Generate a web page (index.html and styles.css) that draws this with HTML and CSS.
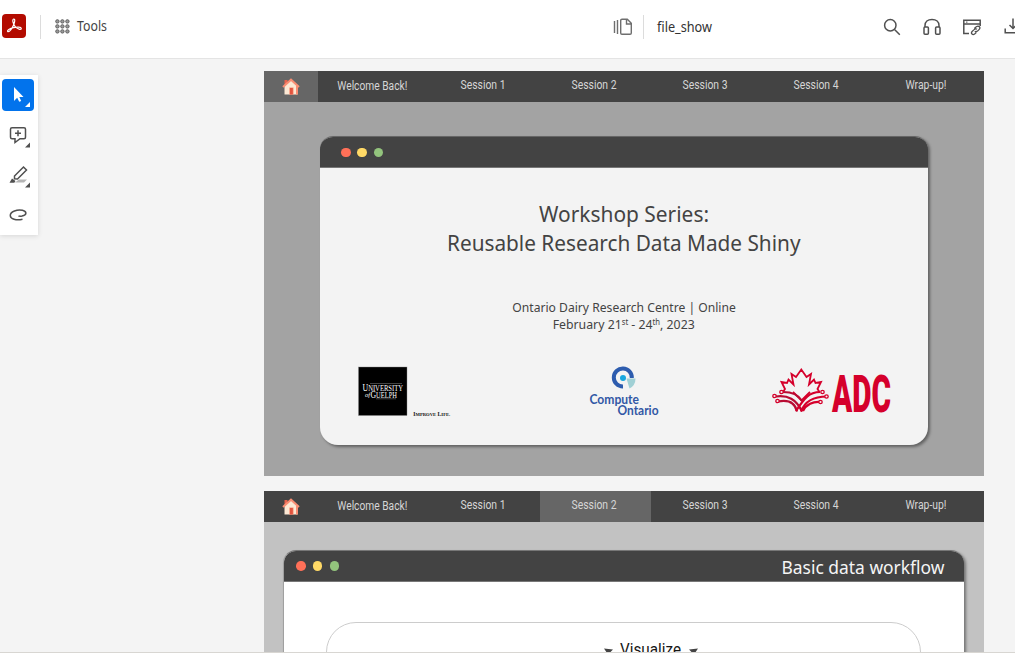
FILE: index.html
```html
<!DOCTYPE html>
<html lang="en">
<head>
<meta charset="utf-8">
<title>file_show</title>
<link rel="stylesheet" href="styles.css">
</head>
<body>
<div class="app">
<header class="topbar">
  <div class="brand">
    <svg class="logo" width="24" height="24" viewBox="0 0 24 24"><rect width="24" height="24" rx="4" fill="#b30b00"/><path d="M11.700 5c1.500-.2 1.200 2.700.2 5.200-1.500 3.800-4.400 7.900-5.900 7.400-1.800-.8 2.200-3.200 5.400-3.900 3.600-.8 7.800-.8 7.900.8.1 1.700-4 .5-6.100-1.900-2-2.200-3.400-7.200-1.500-7.600z" fill="none" stroke="#fff" stroke-width="1.200"/></svg>
    <i class="rule"></i>
    <svg width="15" height="15" viewBox="0 0 15 15" class="grid-icon"><g fill="#999" stroke="#606060"><circle cx="2.4" cy="2.4" r="1.7"/><circle cx="7.4" cy="2.4" r="1.7"/><circle cx="12.4" cy="2.4" r="1.7"/><circle cx="2.4" cy="7.4" r="1.7"/><circle cx="7.4" cy="7.4" r="1.7"/><circle cx="12.4" cy="7.4" r="1.7"/><circle cx="2.4" cy="12.4" r="1.7"/><circle cx="7.4" cy="12.4" r="1.7"/><circle cx="12.4" cy="12.4" r="1.7"/></g></svg>
    <svg class="ui-text tools" width="30" height="20"><text x="0" y="13" textLength="30" lengthAdjust="spacingAndGlyphs">Tools</text></svg>
  </div>
  <div class="document-name">
    <svg width="20" height="18" viewBox="0 0 20 18" fill="none" stroke="#6e6e6e" stroke-width="1.4"><path d="M1.500 3v12M4.500 2v14M9 1.200h5.300l4 4V15q0 1.300-1.300 1.300H9q-1.300 0-1.300-1.300V2.500q0-1.300 1.300-1.300zM13.500 1.500V6H18"/></svg>
    <i class="rule"></i>
    <svg class="ui-text" width="56" height="20"><text x="0" y="14" textLength="55" lengthAdjust="spacingAndGlyphs">file_show</text></svg>
  </div>
  <div class="actions">
    <svg width="18" height="18" viewBox="0 0 18 18" fill="none" stroke="#505050" stroke-width="1.5"><circle cx="7.300" cy="7.300" r="5.700"/><path d="M11.500 11.500l5.300 5.300"/></svg>
    <svg width="20" height="18" viewBox="0 0 20 18" fill="none" stroke="#505050" stroke-width="1.500"><path d="M3 9V7.500C3 4 5.700 1.500 10 1.500S17 4 17 7.500V9"/><rect x="2" y="9" width="4.400" height="7.300" rx="1"/><rect x="13.600" y="9" width="4.400" height="7.300" rx="1"/></svg>
    <svg width="20" height="18" viewBox="0 0 20 18" fill="none" stroke="#505050" stroke-width="1.500"><path d="M7 15.500H1.800V2.200H18.200V8M2 6H18"/><path d="M4 4.100h1.500" stroke-width="1"/><path d="M12.300 10.500l2-1.700c2.500-1.700 4.800.8 2.700 2.800l-1.500 1.500c-1 .9-2 .7-2.700.2M15 11.300c-.8-.8-2-.6-2.900.3l-2 1.900c-1.700 2 .6 4 2.500 2.600l1.700-1.500" stroke-width="1.300"/></svg>
    <svg width="18" height="18" viewBox="0 0 18 18" fill="none" stroke="#505050" stroke-width="1.500"><path d="M1.200 10.500v4.200H17v-4.200M9 .5v10M5.500 7L9 10.500 12.500 7"/></svg>
  </div>
</header>
<div class="workspace">
  <aside class="toolbar">
    <button class="tool selected"><svg width="32" height="32" viewBox="0 0 32 32"><path d="M12 8v14l3.200-3.200 2 4 2-.9-1.900-4H21.500z" fill="#fff"/><path d="M28 23v5h-5z" fill="#fff"/></svg></button>
    <button class="tool"><svg width="32" height="32" viewBox="0 0 32 32" fill="none" stroke="#505050" stroke-width="1.500"><path d="M10 8.700h12q1.500 0 1.500 1.500v8q0 1.500-1.500 1.500h-4L13 23.500v-3.800h-3q-1.500 0-1.500-1.500v-8q0-1.500 1.500-1.500zM16 11.200v6M13 14.200h6"/><path d="M28 23.500v5h-5z" fill="#505050" stroke="none"/></svg></button>
    <button class="tool"><svg width="32" height="32" viewBox="0 0 32 32"><path d="M17 20.500h8l-3 3h-9z" fill="#b5b5b5"/><path d="M12.500 17l9-9 3 3-9 9-3-.2z" fill="none" stroke="#505050" stroke-width="1.500"/><path d="M7.500 23.800l2.500-4.300 3.500 2.500-1.200 1.800z" fill="#505050"/><path d="M28 23.500v5h-5z" fill="#505050"/></svg></button>
    <button class="tool"><svg width="32" height="32" viewBox="0 0 32 32" fill="none" stroke="#505050" stroke-width="1.500"><path d="M20.500 20.300C14 21.800 8.500 20 8.300 16.700 8 12.500 15.500 10 20.500 11.300c4.800 1.400 4.300 4.700-.5 5.700-1.700.3-3 .2-3.500-.3"/></svg></button>
  </aside>
  <main class="pages">
    <section class="slide slide-cover">
      <nav class="slide-nav">
        <div class="home current"><svg width="18" height="18" viewBox="0 0 18 18"><path d="M2.500 2h3v5h-3z" fill="#e7644f"/><path d="M2.500 8L9 2l6.500 6v8.500h-13z" fill="#fce8d4"/><path d="M14 7h2v9.500h-2z" fill="#fa8e73"/><path d="M1 9l8-7.300L17 9" fill="none" stroke="#fa8e73" stroke-width="2"/><path d="M7.300 9.500h4.200v7H7.300z" fill="#fa8e73"/><path d="M8 10h2.800v6.500H8z" fill="#e2543f"/></svg></div>
        <div class="tab"><svg width="111" height="31"><text x="19.300" y="19.300" textLength="70" lengthAdjust="spacingAndGlyphs">Welcome Back!</text></svg></div>
        <div class="tab"><svg width="111" height="31"><text x="31.500" y="18.300" textLength="45" lengthAdjust="spacingAndGlyphs">Session 1</text></svg></div>
        <div class="tab"><svg width="111" height="31"><text x="31.500" y="18.300" textLength="45" lengthAdjust="spacingAndGlyphs">Session 2</text></svg></div>
        <div class="tab"><svg width="111" height="31"><text x="31.500" y="18.300" textLength="45" lengthAdjust="spacingAndGlyphs">Session 3</text></svg></div>
        <div class="tab"><svg width="111" height="31"><text x="31.500" y="18.300" textLength="45" lengthAdjust="spacingAndGlyphs">Session 4</text></svg></div>
        <div class="tab"><svg width="111" height="31"><text x="32.500" y="18.300" textLength="41" lengthAdjust="spacingAndGlyphs">Wrap-up!</text></svg></div>
      </nav>
      <article class="window cover">
        <div class="titlebar"><i class="dot red"></i><i class="dot yellow"></i><i class="dot green"></i></div>
        <div class="cover-body">
          <svg class="cover-text" width="608" height="180">
            <g font-size="22"><text x="219" y="54" textLength="170" lengthAdjust="spacingAndGlyphs">Workshop Series:</text><text x="127" y="83" textLength="353.500" lengthAdjust="spacingAndGlyphs">Reusable Research Data Made Shiny</text></g>
            <g font-size="12.800"><text x="192.300" y="144" textLength="223.500" lengthAdjust="spacingAndGlyphs">Ontario Dairy Research Centre | Online</text>
            <text x="232.700" y="161" textLength="142" lengthAdjust="spacingAndGlyphs">February 21<tspan font-size="8" dy="-4">st</tspan><tspan dy="4"> - 24</tspan><tspan font-size="8" dy="-4">th</tspan><tspan dy="4">, 2023</tspan></text></g>
          </svg>
          <div class="sponsors">
            <svg width="94" height="52" viewBox="0 0 94 52" font-family="Liberation Serif, serif">
              <rect x=".5" y="1" width="48.500" height="48.500" fill="#000" stroke="#888" stroke-width=".4"/>
              <g fill="#fff"><text x="4.500" y="24.500" font-size="9.500" textLength="40.500" lengthAdjust="spacingAndGlyphs">U<tspan font-size="8">NIVERSITY</tspan></text><text x="7" y="31" font-size="6" font-style="italic" textLength="5" lengthAdjust="spacingAndGlyphs">of</text><text x="12.500" y="31.800" font-size="9.500" textLength="26.500" lengthAdjust="spacingAndGlyphs">G<tspan font-size="8">UELPH</tspan></text></g>
              <path d="M12 17.500h32M18 32.800h20" stroke="#aaa" stroke-width=".4"/>
              <text x="55.300" y="49.500" fill="#111" font-weight="bold" font-size="6" textLength="37" lengthAdjust="spacingAndGlyphs">I<tspan font-size="5">MPROVE</tspan> L<tspan font-size="5">IFE.</tspan></text>
            </svg>
            <svg width="72" height="52" viewBox="0 0 72 52">
              <path d="M43.800 12A9 9 0 1 0 35 20.500" fill="none" stroke="#2d5cae" stroke-width="4"/><circle cx="35" cy="12" r="3" fill="#17a7df"/><path d="M38.500 12.500h9q0 7-6 10z" fill="#a0d0d5"/>
              <g font-family="Lato, sans-serif" font-size="12.500" font-weight="bold" fill="#3157a5"><text x="1.500" y="37.500" textLength="49.500" lengthAdjust="spacingAndGlyphs">Compute</text><text x="29.500" y="49" textLength="41" lengthAdjust="spacingAndGlyphs">Ontario</text></g>
            </svg>
            <svg width="120" height="52" viewBox="0 0 120 52">
              <g fill="none" stroke="#d5002b" stroke-width="1.800">
              <path d="M11 26L13 23 9.500 16l5.500 1 1.500-3.500 5 5-2-10.500 4.500 3 5.300-7.500 5.200 7.500 4.500-3-2 10.500 5-5 1.500 3.500 5.500-1-3.500 7 2 3M21 26l8.500 8.500 8.500-8.500"/>
              <g stroke="#b80b32" stroke-width="2.200"><path d="M11 26C22 26 27 29.500 30 35M4 30.500C16 29 24 33 30 45.500M6 35.500C16 33.500 23 36.500 25 45.500"/><path d="M48 26C37 26 32 32.500 24 45M55 30.500C42 30.500 33 34.500 29 45.500M49 36C41 35 34 38.500 31 45" stroke="#d5002b"/></g>
              <g fill="#f3f3f3" stroke-width="1.300"><circle cx="9.500" cy="26" r="1.700"/><circle cx="2.500" cy="30" r="1.700"/><circle cx="5.500" cy="35" r="1.700"/><circle cx="50.500" cy="26" r="1.700"/><circle cx="54.500" cy="30.500" r="1.700"/><circle cx="48.500" cy="36" r="1.700"/></g></g>
              <text class="adc" x="60" y="46" textLength="59" lengthAdjust="spacingAndGlyphs">ADC</text>
            </svg>
          </div>
        </div>
      </article>
    </section>
    <section class="slide slide-workflow">
      <nav class="slide-nav">
        <div class="home"><svg width="18" height="18" viewBox="0 0 18 18"><path d="M2.500 2h3v5h-3z" fill="#e7644f"/><path d="M2.500 8L9 2l6.500 6v8.500h-13z" fill="#fce8d4"/><path d="M14 7h2v9.500h-2z" fill="#fa8e73"/><path d="M1 9l8-7.300L17 9" fill="none" stroke="#fa8e73" stroke-width="2"/><path d="M7.300 9.500h4.200v7H7.300z" fill="#fa8e73"/><path d="M8 10h2.800v6.500H8z" fill="#e2543f"/></svg></div>
        <div class="tab"><svg width="111" height="31"><text x="19.300" y="19.300" textLength="70" lengthAdjust="spacingAndGlyphs">Welcome Back!</text></svg></div>
        <div class="tab"><svg width="111" height="31"><text x="31.500" y="18.300" textLength="45" lengthAdjust="spacingAndGlyphs">Session 1</text></svg></div>
        <div class="tab current"><svg width="111" height="31"><text x="31.500" y="18.300" textLength="45" lengthAdjust="spacingAndGlyphs">Session 2</text></svg></div>
        <div class="tab"><svg width="111" height="31"><text x="31.500" y="18.300" textLength="45" lengthAdjust="spacingAndGlyphs">Session 3</text></svg></div>
        <div class="tab"><svg width="111" height="31"><text x="31.500" y="18.300" textLength="45" lengthAdjust="spacingAndGlyphs">Session 4</text></svg></div>
        <div class="tab"><svg width="111" height="31"><text x="32.500" y="18.300" textLength="41" lengthAdjust="spacingAndGlyphs">Wrap-up!</text></svg></div>
      </nav>
      <article class="window workflow">
        <div class="titlebar"><i class="dot red"></i><i class="dot yellow"></i><i class="dot green"></i>
          <svg class="window-title" width="163" height="31"><text x="0.500" y="23" textLength="163" lengthAdjust="spacingAndGlyphs">Basic data workflow</text></svg></div>
        <div class="diagram"><svg width="100" height="34"><path d="M4 25.500l9 1-5 5zM98 25.500l-9 1 5 5z" fill="#444"/><text x="20" y="32.300" textLength="61" lengthAdjust="spacingAndGlyphs">Visualize</text></svg></div>
      </article>
    </section>
  </main>
</div>
<footer class="edge"></footer>
</div>
</body>
</html>
```
FILE: styles.css
```css
* { box-sizing: border-box; }
body { margin: 0; background: #f4f4f4; font-family: "Noto Sans", sans-serif; }
svg { display: block; flex: none; }
.app { width: 1015px; height: 653px; overflow: hidden; display: flex; flex-direction: column; }
.topbar { height: 59px; flex: none; background: #fff; border-bottom: 1px solid #e4e4e4; display: flex; overflow: hidden; }
.brand { width: 613px; flex: none; display: flex; align-items: flex-start; padding: 14px 0 0 2px; }
.rule { width: 1px; height: 24px; background: #dcdcdc; flex: none; }
.brand .rule { margin: 1px 14px 0; }
.grid-icon { margin-top: 5px; }
.tools { margin: 4px 0 0 7px; }
.ui-text { font-size: 13.500px; fill: #444; overflow: visible; }
.document-name { width: 270px; flex: none; display: flex; align-items: flex-start; padding-top: 18px; }
.document-name .rule { margin: -3px 13px 0 10px; }
.document-name .ui-text { fill: #333; }
.actions { display: flex; align-items: flex-start; padding-top: 18px; }
.actions svg:nth-child(2) { margin-left: 21px; }
.actions svg:nth-child(3) { margin-left: 20px; }
.actions svg:nth-child(4) { margin-left: 22px; }
.workspace { height: 593px; flex: none; display: flex; align-items: flex-start; overflow: hidden; }
.toolbar { width: 38px; height: 160px; margin-top: 16px; padding: 4px 2px; display: flex; flex-direction: column; gap: 8px; background: #fff; box-shadow: 0 1px 5px rgba(0,0,0,.12); flex: none; }
.tool { width: 32px; height: 32px; padding: 0; border: 0; border-radius: 4px; background: transparent; }
.tool.selected { background: #0273ec; }
.pages { width: 720px; margin: 12px 0 0 226px; display: flex; flex-direction: column; gap: 15px; flex: none; }
.slide { height: 405px; flex: none; overflow: hidden; }
.slide-cover { background: #a3a3a3; }
.slide-workflow { background: #c2c2c2; }
.slide-nav { display: flex; height: 31px; background: #434343; }
.home { width: 54px; padding: 6.500px 0 0 18px; }
.tab { width: 111px; }
.tab text { font: 12.300px Roboto, sans-serif; fill: #d6d6d6; }
.current { background: #666; }
.window { overflow: hidden; box-shadow: 2px 2px 3px rgba(0,0,0,.4); }
.cover { width: 608px; height: 309px; margin: 34px 0 0 56px; border-radius: 13px 13px 18px 18px; background: #f3f3f3; border-top: 1px solid #666; }
.titlebar { display: flex; align-items: center; background: #434343; height: 31px; border-bottom: 1px solid #777; }
.dot { width: 9.600px; height: 9.600px; border-radius: 50%; flex: none; }
.red { background: #ff7058; }
.yellow { background: #ffd966; }
.green { background: #93c47d; }
.cover .titlebar { gap: 6.700px; padding: 1px 0 0 21px; }
.cover-text { fill: #434343; }
.sponsors { display: flex; align-items: flex-start; padding: 18px 0 0 38px; }
.sponsors svg:nth-child(2) { margin-left: 136px; }
.sponsors svg:nth-child(3) { margin-left: 112px; }
.adc { font: 900 52px Roboto, sans-serif; fill: #d5002b; }
.workflow { width: 681px; height: 340px; margin: 28px 0 0 19px; border-radius: 13px 13px 18px 18px; background: #fff; border: 1px solid #a0a0a0; border-top-color: #777; border-width: 1px 0 0 1px; }
.workflow .titlebar { gap: 7.300px; padding-left: 12px; }
.window-title { margin-left: auto; margin-right: 20px; overflow: visible; }
.window-title text { font-size: 18px; fill: #f5f5f5; }
.diagram { width: 595px; height: 200px; margin: 40px 0 0 42px; border: 1px solid #ccc; border-radius: 30px; padding-left: 273px; }
.diagram text { font: 16px Roboto, sans-serif; fill: #161616; }
.edge { height: 1px; flex: none; background: #d8d6d2; }
```
